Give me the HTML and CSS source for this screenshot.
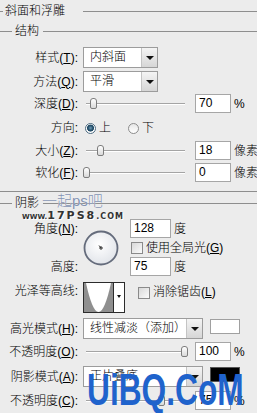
FILE: index.html
```html
<!DOCTYPE html>
<html>
<head>
    <title>斜面和浮雕</title>
    <link rel="stylesheet" href="styles.css">
</head>
<body>
    <div class="group-title">
        <span class="tick"></span><span class="title-text">斜面和浮雕</span><span class="rule"></span>
    </div>
    <div class="legend">
        <span class="rule short"></span><span class="legend-text">结构</span><span class="rule"></span>
    </div>

    <div class="row row-style">
        <span class="lbl">样式(<u>T</u>):</span>
        <div class="select sel-small"><span class="sel-val">内斜面</span><span class="sel-btn"></span></div>
    </div>
    <div class="row row-method">
        <span class="lbl">方法(<u>Q</u>):</span>
        <div class="select sel-small"><span class="sel-val">平滑</span><span class="sel-btn"></span></div>
    </div>
    <div class="row row-depth">
        <span class="lbl">深度(<u>D</u>):</span>
        <div class="slider"><span class="track"></span><span class="thumb" style="left:7px"></span></div>
        <div class="field">70</div><span class="unit">%</span>
    </div>
    <div class="row row-dir">
        <span class="lbl">方向:</span>
        <span class="radio on"></span><span class="radio-text">上</span>
        <span class="radio gap"></span><span class="radio-text">下</span>
    </div>
    <div class="row row-size">
        <span class="lbl">大小(<u>Z</u>):</span>
        <div class="slider"><span class="track"></span><span class="thumb" style="left:14px"></span></div>
        <div class="field">18</div><span class="unit">像素</span>
    </div>
    <div class="row row-soft">
        <span class="lbl">软化(<u>F</u>):</span>
        <div class="slider"><span class="track"></span><span class="thumb" style="left:0px"></span></div>
        <div class="field">0</div><span class="unit">像素</span>
    </div>

    <div class="separator"></div>
    <div class="legend legend-shade">
        <span class="rule short"></span><span class="legend-text">阴影</span><span class="rule"></span>
    </div>

    <div class="angle-grid">
        <span class="lbl">角度(<u>N</u>):</span>
        <div class="dial">
            <svg width="36" height="36" viewBox="0 0 36 36">
                <defs>
                    <radialGradient id="dialFill" cx="45%" cy="40%" r="60%">
                        <stop offset="0" stop-color="#ffffff"/>
                        <stop offset="1" stop-color="#e2e5ea"/>
                    </radialGradient>
                </defs>
                <circle cx="18" cy="18" r="16.5" fill="url(#dialFill)" stroke="#656c7c" stroke-width="1.8"/>
                <line x1="16" y1="18" x2="20" y2="18" stroke="#333" stroke-width="1"/>
                <line x1="18" y1="16" x2="18" y2="20" stroke="#333" stroke-width="1"/>
                <line x1="18" y1="18" x2="16" y2="15.5" stroke="#333" stroke-width="1"/>
            </svg>
        </div>
        <div class="cell"><div class="field field-wide">128</div><span class="unit">度</span></div>

        <span class="lbl"></span>
        <div class="cell"><span class="check"></span><span class="check-text">使用全局光(<u>G</u>)</span></div>

        <span class="lbl">高度:</span>
        <div class="cell"><div class="field field-wide">75</div><span class="unit">度</span></div>
    </div>

    <div class="row row-contour">
        <span class="lbl">光泽等高线:</span>
        <div class="contour">
            <span class="contour-thumb">
                <svg width="29" height="29" viewBox="0 0 29 29">
                    <rect width="29" height="29" fill="#8f8f8f"/>
                    <path d="M2 0 C6 18 10 29 14.5 29 C19 29 23 18 27 0 Z" fill="#ffffff"/>
                </svg>
            </span>
            <span class="contour-btn"></span>
        </div>
        <span class="check check-aa"></span><span class="check-text">消除锯齿(<u>L</u>)</span>
    </div>

    <div class="row row-hmode">
        <span class="lbl">高光模式(<u>H</u>):</span>
        <div class="select sel-wide"><span class="sel-val">线性减淡（添加）</span><span class="sel-btn"></span></div>
        <span class="swatch white"></span>
    </div>
    <div class="row row-op1">
        <span class="lbl">不透明度(<u>O</u>):</span>
        <div class="slider"><span class="track"></span><span class="thumb" style="left:98px"></span></div>
        <div class="field">100</div><span class="unit">%</span>
    </div>
    <div class="row row-smode">
        <span class="lbl">阴影模式(<u>A</u>):</span>
        <div class="select sel-wide"><span class="sel-val">正片叠底</span><span class="sel-btn"></span></div>
        <span class="swatch black"></span>
    </div>
    <div class="row row-op2">
        <span class="lbl">不透明度(<u>C</u>):</span>
        <div class="slider"><span class="track"></span><span class="thumb" style="left:75px"></span></div>
        <div class="field">75</div><span class="unit">%</span>
    </div>

    <div class="mark mark-cn">一起ps吧</div>
    <div class="mark mark-url"><span class="small">WWW.</span>17PS8<span class="tail">.COM</span></div>
    <div class="mark mark-big">UiBQ.CoM</div>
</body>
</html>
```

FILE: styles.css
```css
body {
    margin: 0;
    width: 257px;
    height: 413px;
    overflow: hidden;
    position: relative;
    background-color: #ececec;
    color: #000;
    font-family: "Liberation Sans", "Noto Sans CJK SC", sans-serif;
    font-size: 12px;
    font-weight: 300;
    line-height: 14px;
}
u {
    text-decoration: underline;
}

/* group headings */
.group-title,
.legend {
    display: flex;
    align-items: center;
}
.group-title {
    height: 22px;
}
.legend {
    height: 18px;
}
.tick {
    width: 3px;
    border-top: 1px solid #8e8e8e;
}
.rule {
    flex: 1;
    border-top: 1px solid #8e8e8e;
}
.rule.short {
    flex: none;
    width: 12px;
}
.title-text {
    margin: 0 18px 0 2px;
}
.legend-text {
    margin: 0 4px 0 3px;
}
.separator {
    margin-top: 9px;
    border-top: 1px solid #8e8e8e;
}
.legend-shade {
    height: 22px;
}

/* rows */
.row {
    display: flex;
    align-items: center;
    height: 19px;
}
.lbl {
    flex: none;
    width: 78px;
    margin-right: 5px;
    text-align: right;
    white-space: nowrap;
}
.row-style { margin-top: 7px; height: 21px; }
.row-method { margin-top: 3px; height: 21px; }
.row-depth { margin-top: 2px; }
.row-dir { margin-top: 5px; height: 20px; }
.row-size { margin-top: 3px; }
.row-soft { margin-top: 3px; }
.row-contour { margin-top: 6px; height: 31px; align-items: flex-start; }
.row-hmode { margin-top: 5px; height: 21px; }
.row-op1 { margin-top: 3px; }
.row-smode { margin-top: 5px; height: 21px; }
.row-op2 { margin-top: 4px; }

/* select */
.select {
    display: flex;
    height: 21px;
    box-sizing: border-box;
    border: 1px solid #9c9c9c;
    background-color: white;
}
.sel-small { width: 75px; }
.sel-wide { width: 120px; }
.sel-val {
    flex: 1;
    padding-left: 6px;
    line-height: 19px;
    white-space: nowrap;
    overflow: hidden;
}
.sel-btn {
    width: 15px;
    position: relative;
    border-left: 1px solid #c4c4c4;
    background: linear-gradient(#f4f4f4, #d6d6d6);
}
.sel-btn::after {
    content: "";
    position: absolute;
    left: 4px;
    top: 8px;
    border-left: 4px solid transparent;
    border-right: 4px solid transparent;
    border-top: 4px solid #111;
}

/* slider */
.slider {
    flex: none;
    position: relative;
    width: 107px;
    height: 19px;
    margin-right: 5px;
}
.track {
    position: absolute;
    left: 3px;
    right: 5px;
    top: 9px;
    border-top: 1px solid #a4a4a4;
    border-bottom: 1px solid #ffffff;
}
.thumb {
    position: absolute;
    top: 4px;
    width: 5px;
    height: 9px;
    border: 1px solid #7d7d7d;
    border-radius: 3px 3px 2px 2px;
    background: linear-gradient(#ffffff, #d9d9d9);
}

/* text fields */
.field {
    flex: none;
    width: 36px;
    height: 19px;
    box-sizing: border-box;
    border: 1px solid #a6a6a6;
    background-color: white;
    padding-left: 3px;
    line-height: 17px;
}
.field-wide {
    width: 41px;
}
.unit {
    margin-left: 3px;
    white-space: nowrap;
}

/* radio */
.radio {
    flex: none;
    width: 9px;
    height: 9px;
    margin-left: 2px;
    border: 1px solid #8c8c8c;
    border-radius: 50%;
    background: linear-gradient(#e6e6e6, #ffffff);
}
.radio.on {
    background: radial-gradient(circle at 50% 45%, #6d9cb8 0, #244d68 2.5px, #244d68 3.2px, #ffffff 3.8px);
    border-color: #4f6c82;
}
.radio.gap {
    margin-left: 17px;
}
.radio-text {
    margin-left: 3px;
}

/* angle block */
.angle-grid {
    display: grid;
    grid-template-columns: 78px 42px auto;
    grid-template-rows: 19px 19px 19px;
    column-gap: 5px;
    margin-top: 5px;
    align-items: center;
}
.angle-grid .lbl {
    width: auto;
    margin: 0;
}
.dial {
    grid-column: 2;
    grid-row: 1 / 4;
    height: 36px;
}
.dial svg {
    display: block;
}
.cell {
    display: flex;
    align-items: center;
}
.check {
    flex: none;
    width: 10px;
    height: 10px;
    margin-left: 1px;
    border: 1px solid #8a8a8a;
    background: linear-gradient(135deg, #d8d8d8, #fbfbfb);
}
.check-text {
    margin-left: 3px;
    white-space: nowrap;
}

/* contour */
.row-contour .lbl {
    margin-top: 2px;
}
.contour {
    flex: none;
    display: flex;
    width: 42px;
    height: 31px;
    box-sizing: border-box;
    border: 1px solid #2b2b2b;
    background-color: white;
}
.contour-thumb {
    width: 29px;
    border-right: 1px solid #2b2b2b;
}
.contour-thumb svg {
    display: block;
}
.contour-btn {
    flex: 1;
    position: relative;
}
.contour-btn::after {
    content: "";
    position: absolute;
    left: 3px;
    top: 12px;
    border-left: 2px solid transparent;
    border-right: 2px solid transparent;
    border-top: 3px solid #111;
}
.check-aa {
    margin: 5px 0 0 13px;
}
.row-contour .check-text {
    margin-top: 3px;
}

/* colour swatches */
.swatch {
    align-self: flex-start;
    flex: none;
    width: 30px;
    height: 15px;
    margin: 1px 0 0 7px;
    box-sizing: border-box;
    border: 1px solid #a0a0a0;
}
.swatch.white {
    background-color: white;
}
.swatch.black {
    background-color: black;
    border-color: #555;
}

/* watermarks over the dialog */
.mark {
    position: absolute;
    white-space: nowrap;
}
.mark-cn {
    left: 42px;
    top: 193px;
    font-size: 15px;
    line-height: 16px;
    color: #8392b2;
    text-shadow: 0 0 1px #fff;
}
.mark-url {
    left: 22px;
    top: 210px;
    font-family: "DejaVu Sans", sans-serif;
    font-weight: bold;
    font-size: 11px;
    line-height: 12px;
    letter-spacing: 2px;
    color: #333;
    text-shadow: 1px 1px 0 #fff;
}
.mark-url .small {
    font-size: 7px;
    letter-spacing: 0;
}
.mark-url .tail {
    font-size: 8px;
    letter-spacing: 1px;
}
.mark-big {
    left: 87px;
    top: 368px;
    font-family: "Liberation Sans", sans-serif;
    font-size: 44px;
    font-weight: bold;
    line-height: 44px;
    color: #1f63cc;
    transform: scaleX(0.72);
    transform-origin: left top;
}
```
